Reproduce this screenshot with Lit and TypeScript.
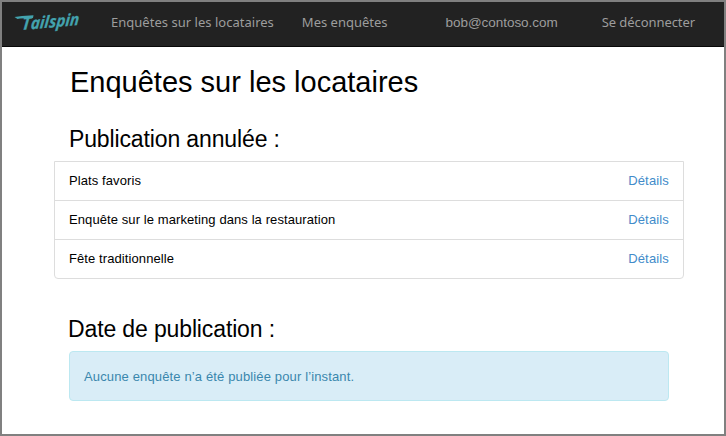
import { LitElement, html, css } from "lit";
import { customElement } from "lit/decorators.js";

@customElement("tailspin-logo")
class TailspinLogo extends LitElement {
  static styles = css`
    :host { display: block; width: 72px; height: 30px; }
    svg { display: block; }
    .word { font: italic bold 16.5px "Open Sans", "Noto Sans", sans-serif; fill: #43a3ae; stroke: #43a3ae; stroke-width: 0.25px; }
    .cap { font-size: 18px; }
    .bar { fill: #43a3ae; }
  `;
  render() {
    return html`<svg width="72" height="30" viewBox="0 0 72 30" role="img" aria-label="Tailspin">
      <path class="bar" d="M0.5 11 L8 10 L19.5 9.2 L19 12 L6 12.4 L3.5 13 Z"></path>
      <text class="word" transform="translate(7.6 24) rotate(-5) skewX(-10)" textLength="57.5" lengthAdjust="spacingAndGlyphs"><tspan class="cap">T</tspan>ailspin</text>
    </svg>`;
  }
}

@customElement("app-root")
class AppRoot extends LitElement {
  static styles = css`
    :host {
      display: block; box-sizing: border-box; width: 726px; height: 436px;
      border: 2px solid #808080; background: #fff; color: #000;
      font: 13px/20px "Liberation Sans", Arial, sans-serif; overflow: hidden;
    }
    a { text-decoration: none; }
    nav {
      display: flex; align-items: flex-start; box-sizing: border-box; height: 45px;
      padding: 0 29px 0 12px; background: #222; border-bottom: 1px solid #080808;
    }
    tailspin-logo { margin-top: 4px; }
    nav a {
      margin-top: 10px; color: #9d9d9d; white-space: nowrap;
      font: 13px/20px "Noto Sans", sans-serif;
    }
    .surveys { margin-left: 25px; letter-spacing: 0.02px; }
    .mine { margin-left: 28px; }
    nav .mail { margin-left: auto; margin-top: 11px; font: 13.5px/20px "Liberation Sans", Arial, sans-serif; letter-spacing: -0.04px; }
    .out { margin-left: 44px; letter-spacing: -0.07px; }
    main { padding: 0 40px 0 52px; }
    h1, h2 { margin: 0; font-weight: 400; }
    h1 { padding: 17px 0 0 16px; font-size: 29px; line-height: 36px; }
    h2 { font-size: 23px; line-height: 28px; padding-left: 15px; letter-spacing: -0.13px; }
    .first { margin-top: 25px; }
    .second { margin-top: 36px; padding-left: 14px; }
    ul {
      list-style: none; margin: 8px 0 0; padding: 0;
      border: 1px solid #ddd; border-radius: 0 0 4px 4px;
    }
    li { display: flex; justify-content: space-between; padding: 9px 14px; letter-spacing: 0.09px; }
    li + li { border-top: 1px solid #ddd; }
    li a { color: #428bca; letter-spacing: 0.15px; }
    .info {
      margin: 8px 15px 0; padding: 15px 14px 13px; line-height: 20px; color: #3a87ad;
      background: #d9edf7; border: 1px solid #bce8f1; border-radius: 4px; letter-spacing: 0.14px;
    }
  `;

  private surveys = ["Plats favoris", "Enquête sur le marketing dans la restauration", "Fête traditionnelle"];

  render() {
    return html`
      <nav>
        <tailspin-logo></tailspin-logo>
        <a class="surveys">Enquêtes sur les locataires</a>
        <a class="mine">Mes enquêtes</a>
        <a class="mail">bob@contoso.com</a>
        <a class="out">Se déconnecter</a>
      </nav>
      <main>
        <h1>Enquêtes sur les locataires</h1>
        <h2 class="first">Publication annulée :</h2>
        <ul>
          ${this.surveys.map((name) => html`<li><span>${name}</span><a>Détails</a></li>`)}
        </ul>
        <h2 class="second">Date de publication :</h2>
        <div class="info">Aucune enquête n’a été publiée pour l’instant.</div>
      </main>
    `;
  }
}
